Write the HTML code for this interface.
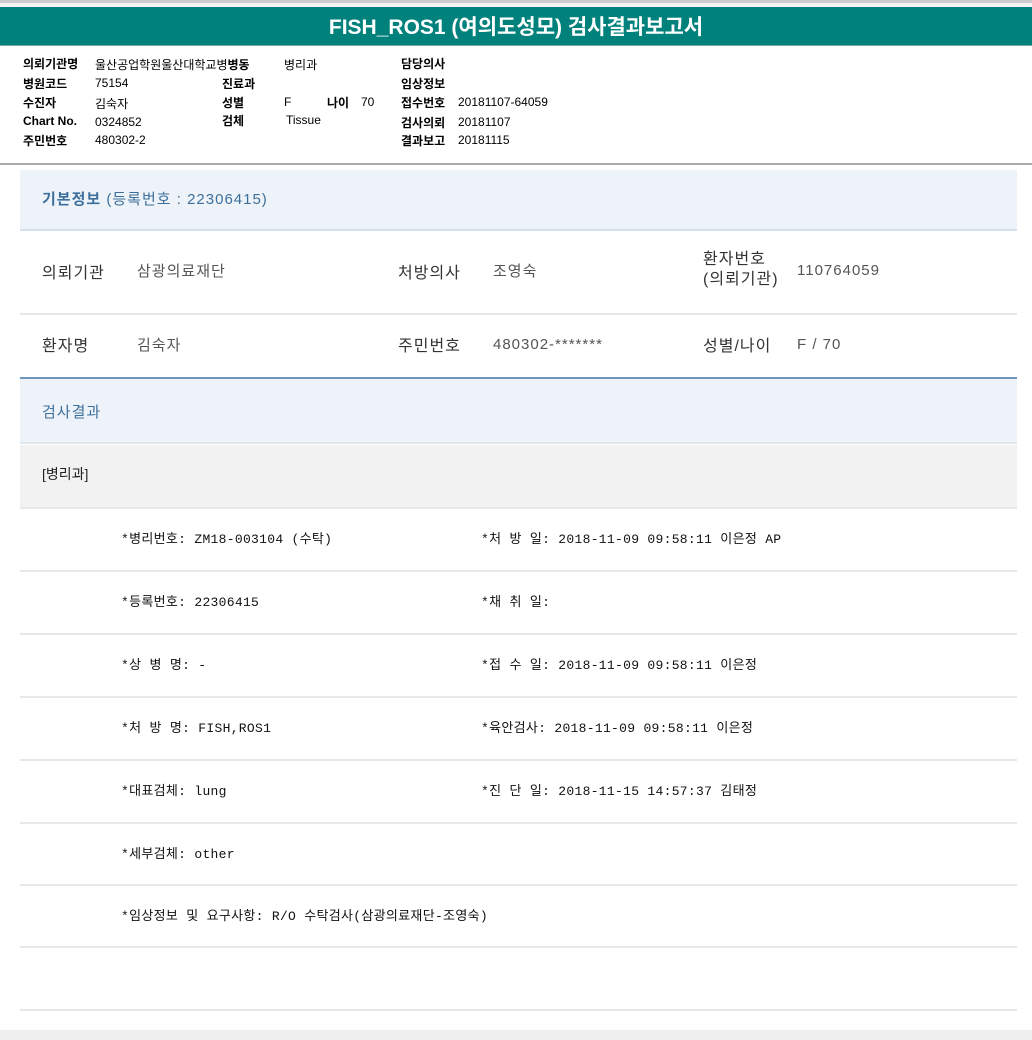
<!DOCTYPE html>
<html><head><meta charset="utf-8"><style>
*{margin:0;padding:0;box-sizing:border-box}
body{width:1032px;height:1040px;background:#fff;font-family:"Liberation Sans","Noto Sans CJK KR","NanumGothic",sans-serif;position:relative;overflow:hidden}
.a{position:absolute;white-space:nowrap}
.hd{position:absolute;left:0;top:0;width:1032px;height:3px;background:#ccc}
.hd2{position:absolute;left:0;top:3px;width:1032px;height:4px;background:#f4f4f4}
.title{position:absolute;left:0;top:7px;width:1032px;height:39px;background:#00817c;color:#fff;font-size:21px;font-weight:bold;text-align:center;line-height:41px;border-bottom:1px solid #7a9}
.t{font-size:12px;color:#000}
.b{font-weight:bold}
.hline{position:absolute;left:0;top:163px;width:1032px;height:2px;background:#aaa}
.sec{position:absolute;left:20px;width:997px;background:#edf3f8}
.lbl{font-size:16px;color:#333;letter-spacing:1px}
.val{font-size:15px;color:#555;letter-spacing:1px}
.row{font-size:13px;color:#111;font-family:"Liberation Mono","Noto Sans CJK KR",monospace;letter-spacing:0.3px}
.ln{position:absolute;left:20px;width:997px;height:2px;background:#e8e8e8}
</style></head><body>
<div class="hd"></div><div class="hd2"></div>
<div class="title">FISH_ROS1 (여의도성모) 검사결과보고서</div>

<div class="a t b" style="left:23px;top:55px">의뢰기관명</div><div class="a t" style="left:95px;top:56px">울산공업학원울산대학교병<b>병동</b></div><div class="a t" style="left:284px;top:56px">병리과</div>
<div class="a t b" style="left:401px;top:55px">담당의사</div>
<div class="a t b" style="left:23px;top:75px">병원코드</div><div class="a t" style="left:95px;top:76px">75154</div>
<div class="a t b" style="left:222px;top:75px">진료과</div><div class="a t b" style="left:401px;top:75px">임상정보</div>
<div class="a t b" style="left:23px;top:94px">수진자</div><div class="a t" style="left:95px;top:95px">김숙자</div>
<div class="a t b" style="left:222px;top:94px">성별</div><div class="a t" style="left:284px;top:95px">F</div>
<div class="a t b" style="left:327px;top:94px">나이</div><div class="a t" style="left:361px;top:95px">70</div>
<div class="a t b" style="left:401px;top:94px">접수번호</div><div class="a t" style="left:458px;top:95px">20181107-64059</div>
<div class="a t b" style="left:23px;top:114px">Chart No.</div><div class="a t" style="left:95px;top:115px">0324852</div>
<div class="a t b" style="left:222px;top:112px">검체</div><div class="a t" style="left:286px;top:113px">Tissue</div>
<div class="a t b" style="left:401px;top:114px">검사의뢰</div><div class="a t" style="left:458px;top:115px">20181107</div>
<div class="a t b" style="left:23px;top:132px">주민번호</div><div class="a t" style="left:95px;top:133px">480302-2</div>
<div class="a t b" style="left:401px;top:132px">결과보고</div><div class="a t" style="left:458px;top:133px">20181115</div>

<div class="hline"></div>

<div class="sec" style="top:170px;height:61px;border-bottom:2px solid #d3e1ec"></div>
<div class="a" style="left:42px;top:188px;font-size:15px;color:#3d6f9d;letter-spacing:1px"><b>기본정보</b> (등록번호 : 22306415)</div>

<div class="a lbl" style="left:42px;top:259px">의뢰기관</div><div class="a val" style="left:137px;top:260px">삼광의료재단</div>
<div class="a lbl" style="left:398px;top:259px">처방의사</div><div class="a val" style="left:493px;top:260px">조영숙</div>
<div class="a lbl" style="left:703px;top:250px;line-height:20px">환자번호<br>(의뢰기관)</div><div class="a val" style="left:797px;top:262px">110764059</div>
<div class="ln" style="top:313px"></div>
<div class="a lbl" style="left:42px;top:332px">환자명</div><div class="a val" style="left:137px;top:334px">김숙자</div>
<div class="a lbl" style="left:398px;top:332px">주민번호</div><div class="a val" style="left:493px;top:336px">480302-*******</div>
<div class="a lbl" style="left:703px;top:332px">성별/나이</div><div class="a val" style="left:797px;top:336px">F / 70</div>

<div class="sec" style="top:377px;height:67px;border-top:2px solid #6d96c0;border-bottom:2px solid #dfe6ec"></div>
<div class="a" style="left:42px;top:401px;font-size:15px;color:#3d6f9d;letter-spacing:1px">검사결과</div>
<div class="a" style="left:20px;top:445px;width:997px;height:64px;background:#f2f2f2;border-bottom:2px solid #e8e8e8"></div>
<div class="a" style="left:42px;top:464px;font-size:14px;color:#222">[병리과]</div>

<div class="a row" style="left:121px;top:528px">*병리번호: ZM18-003104 (수탁)</div>
<div class="a row" style="left:481px;top:528px">*처 방 일: 2018-11-09 09:58:11  이은정 AP</div>
<div class="ln" style="top:570px"></div>
<div class="a row" style="left:121px;top:591px">*등록번호: 22306415</div>
<div class="a row" style="left:481px;top:591px">*채 취 일:</div>
<div class="ln" style="top:633px"></div>
<div class="a row" style="left:121px;top:654px">*상 병 명: -</div>
<div class="a row" style="left:481px;top:654px">*접 수 일: 2018-11-09 09:58:11  이은정</div>
<div class="ln" style="top:696px"></div>
<div class="a row" style="left:121px;top:717px">*처 방 명: FISH,ROS1</div>
<div class="a row" style="left:481px;top:717px">*육안검사: 2018-11-09 09:58:11  이은정</div>
<div class="ln" style="top:759px"></div>
<div class="a row" style="left:121px;top:780px">*대표검체: lung</div>
<div class="a row" style="left:481px;top:780px">*진 단 일: 2018-11-15 14:57:37  김태정</div>
<div class="ln" style="top:822px"></div>
<div class="a row" style="left:121px;top:843px">*세부검체: other</div>
<div class="ln" style="top:884px"></div>
<div class="a row" style="left:121px;top:905px">*임상정보 및 요구사항: R/O 수탁검사(삼광의료재단-조영숙)</div>
<div class="ln" style="top:946px"></div>
<div class="ln" style="top:1009px"></div>
<div class="a" style="left:0;top:1030px;width:1032px;height:10px;background:#efefef"></div>
</body></html>
